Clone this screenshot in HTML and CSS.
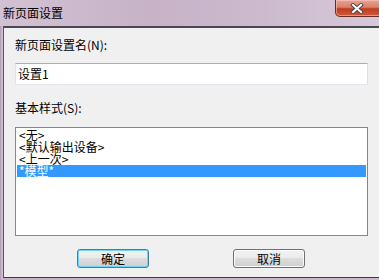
FILE: index.html
```html
<!DOCTYPE html>
<html lang="zh-CN">
<head>
<meta charset="utf-8">
<title>新页面设置</title>
<link rel="stylesheet" href="styles.css">
</head>
<body>
<div class="window">
  <div class="titlebar">
    <span class="title">新页面设置</span>
    <div class="close">
      <svg width="14" height="11" viewBox="0 0 14 11">
        <path d="M3 2 L11 9 M11 2 L3 9" stroke="#4b4b55" stroke-width="4" stroke-linecap="square"/>
        <path d="M3 2 L11 9 M11 2 L3 9" stroke="#ffffff" stroke-width="2" stroke-linecap="square"/>
      </svg>
    </div>
  </div>
  <div class="client">
    <div class="label label-first">新页面设置名(N):</div>
    <div class="textbox">设置1</div>
    <div class="label label-second">基本样式(S):</div>
    <div class="listbox">
      <div class="item">&lt;无&gt;</div>
      <div class="item">&lt;默认输出设备&gt;</div>
      <div class="item">&lt;上一次&gt;</div>
      <div class="item selected">*模型*</div>
    </div>
    <div class="buttons">
      <div class="btn default">确定</div>
      <div class="btn">取消</div>
    </div>
  </div>
</div>
</body>
</html>
```
FILE: styles.css
```css
html, body {
  margin: 0;
  padding: 0;
  width: 379px;
  height: 280px;
  overflow: hidden;
}
body {
  font-family: "Noto Sans CJK SC", "Liberation Sans", sans-serif;
  font-size: 12px;
  color: #000;
}
.window {
  width: 379px;
  height: 280px;
  display: flex;
  flex-direction: column;
  background: linear-gradient(90deg, #a796a9 0, #d4c4d6 2px, #c7b3c8 3px, #cbb8cc 100%);
}
.titlebar {
  height: 26px;
  display: flex;
  align-items: flex-start;
  background: linear-gradient(90deg, #d2c1d3 0%, #c7b2c8 40%, #cdbacf 70%, #d6c9d8 100%);
}
.title {
  margin-left: 3px;
  margin-top: 5px;
  line-height: 16px;
  font-size: 12px;
  color: #000;
}
.close {
  margin-left: auto;
  margin-right: -4px;
  width: 46px;
  height: 16px;
  border: 1px solid #6a2a25;
  border-top: none;
  border-radius: 0 0 5px 5px;
  background: linear-gradient(180deg, #e8a493 0%, #d9806b 45%, #c23c1f 55%, #cf5a3b 100%);
  box-shadow: inset 0 0 0 1px rgba(255, 210, 200, 0.5);
  display: flex;
  align-items: center;
  justify-content: center;
}
.close svg {
  display: block;
  margin-left: -4px;
}
.client {
  flex: 1;
  margin-left: 3px;
  margin-bottom: 2px;
  border-top: 2px solid #4e4553;
  border-left: 1px solid #5b5560;
  border-bottom: 1px solid #3d3a40;
  background: #f0f0f0;
  padding: 0 11px 0 11px;
  display: flex;
  flex-direction: column;
}
.label {
  line-height: 14px;
  height: 14px;
}
.label-first {
  margin-top: 10px;
}
.label-second {
  margin-top: 16px;
}
.textbox {
  margin-top: 11px;
  height: 20px;
  line-height: 20px;
  border: 1px solid #e3e9ef;
  border-top-color: #abadb3;
  border-left-color: #e2e3ea;
  border-right-color: #dbdfe6;
  background: #fff;
  padding-left: 2px;
}
.listbox {
  margin-top: 12px;
  height: 105px;
  border: 1px solid #828790;
  background: #fff;
  padding: 1px;
}
.item {
  height: 12px;
  line-height: 12px;
  padding-left: 2px;
  white-space: nowrap;
}
.item.selected {
  background: #3399ff;
  color: #fff;
}
.buttons {
  margin-top: 13px;
  display: flex;
  gap: 84px;
  padding-left: 62px;
}
.btn {
  width: 70px;
  height: 17px;
  line-height: 17px;
  text-align: center;
  border: 1px solid #707070;
  border-radius: 3px;
  box-shadow: inset 0 0 0 1px #fbfbfb;
  background: linear-gradient(180deg, #f2f2f2 0%, #ebebeb 50%, #dddddd 50%, #cfcfcf 100%);
}
.btn.default {
  border-color: #3c7fb1;
  box-shadow: inset 0 0 0 1px #6fd2f7;
}
```
